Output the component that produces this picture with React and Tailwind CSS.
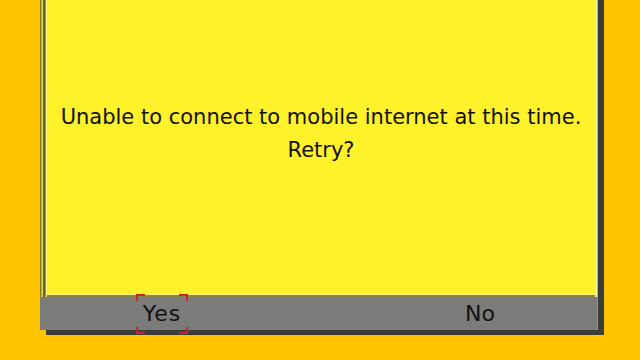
import React from 'react'

const FONT = { fontFamily: '"DejaVu Sans", "Liberation Sans", sans-serif' }

function Corner({ className }) {
    return <span className={`absolute w-[9px] h-[7px] border-[#c4262a] ${className}`} />
}

export default function App() {
    return (
        <div className="w-[640px] h-[360px] bg-[#ffc300] overflow-hidden" style={FONT}>
            <div className="-mt-[10px] ml-[40px] w-[558px] h-[340px] bg-[#7b7b7a] shadow-[6px_5px_0_#3c3c3a] flex flex-col">
                {/* Dialog body */}
                <div className="h-[307px] flex">
                    {/* left bevel */}
                    <div className="w-[1px] bg-[#837d2e]" />
                    <div className="w-[1px] bg-[#b2aa3e]" />
                    <div className="w-[1px] bg-[#e6dd56]" />
                    <div className="w-[2px] bg-[#69642b]" />
                    <div className="w-[1px] bg-[#9d953a]" />
                    <div className="w-[1px] bg-[#fff47a]" />
                    <div className="flex-1 flex flex-col">
                        <div className="flex-1 bg-[#fff22a] pt-[111px] text-center text-[21px] leading-[33px] text-[#111]">
                            <p>Unable to connect to mobile internet at this time.</p>
                            <p>Retry?</p>
                        </div>
                        <div className="h-[2px] bg-[#f6ee82]" />
                        <div className="h-[2px] bg-[#8c8640]" />
                    </div>
                    {/* right bevel */}
                    <div className="w-[2px] bg-[#f4efa0]" />
                    <div className="w-[1px] bg-[#b8b48a]" />
                </div>

                {/* Soft keys */}
                <div className="flex-1 flex items-center text-[22px] text-[#111] border-r border-[#929290]">
                    <div className="relative ml-[96px] w-[52px] h-[33px] flex items-center justify-center">
                        <span className="tracking-[1px]">Yes</span>
                        <Corner className="-top-[3px] left-0 border-t-2 border-l-2" />
                        <Corner className="-top-[3px] right-0 border-t-2 border-r-2" />
                        <Corner className="-bottom-[4px] left-0 border-b-2 border-l-2" />
                        <Corner className="-bottom-[4px] right-0 border-b-2 border-r-2" />
                    </div>
                    <div className="ml-[266px] w-[52px] text-center">No</div>
                </div>
            </div>
        </div>
    )
}
